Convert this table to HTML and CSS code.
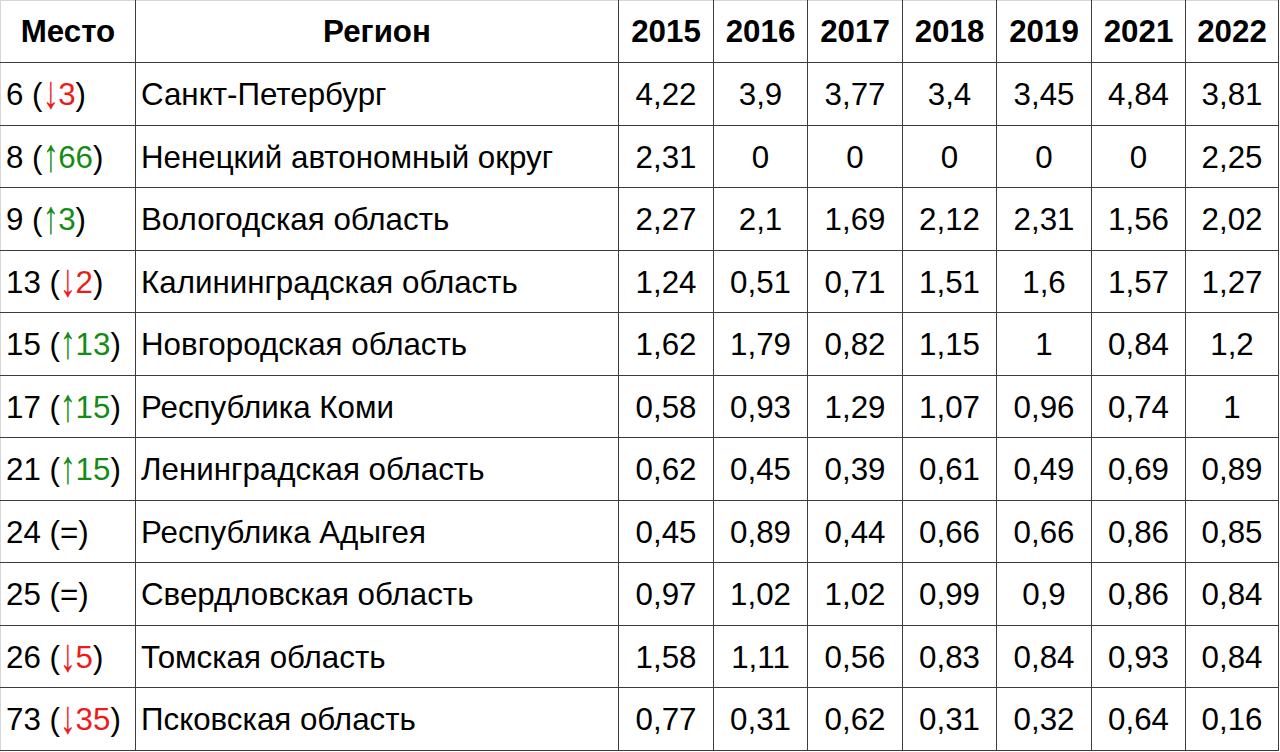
FILE: index.html
```html
<!DOCTYPE html>
<html lang="ru">
<head>
<meta charset="utf-8">
<title>Рейтинг регионов</title>
<link rel="stylesheet" href="styles.css">
</head>
<body>
<table class="rating">
  <colgroup>
    <col class="c-place"><col class="c-region">
    <col class="c-y1"><col class="c-y"><col class="c-y1"><col class="c-y"><col class="c-y1"><col class="c-y"><col class="c-last">
  </colgroup>
  <thead>
    <tr>
      <th>Место</th><th>Регион</th><th>2015</th><th>2016</th><th>2017</th><th>2018</th><th>2019</th><th>2021</th><th>2022</th>
    </tr>
  </thead>
  <tbody>
    <tr><td class="place">6 (<span class="down"><span class="arr">↓</span>3</span>)</td><td class="region">Санкт-Петербург</td><td>4,22</td><td>3,9</td><td>3,77</td><td>3,4</td><td>3,45</td><td>4,84</td><td>3,81</td></tr>
    <tr><td class="place">8 (<span class="up"><span class="arr">↑</span>66</span>)</td><td class="region">Ненецкий автономный округ</td><td>2,31</td><td>0</td><td>0</td><td>0</td><td>0</td><td>0</td><td>2,25</td></tr>
    <tr><td class="place">9 (<span class="up"><span class="arr">↑</span>3</span>)</td><td class="region">Вологодская область</td><td>2,27</td><td>2,1</td><td>1,69</td><td>2,12</td><td>2,31</td><td>1,56</td><td>2,02</td></tr>
    <tr><td class="place">13 (<span class="down"><span class="arr">↓</span>2</span>)</td><td class="region">Калининградская область</td><td>1,24</td><td>0,51</td><td>0,71</td><td>1,51</td><td>1,6</td><td>1,57</td><td>1,27</td></tr>
    <tr><td class="place">15 (<span class="up"><span class="arr">↑</span>13</span>)</td><td class="region">Новгородская область</td><td>1,62</td><td>1,79</td><td>0,82</td><td>1,15</td><td>1</td><td>0,84</td><td>1,2</td></tr>
    <tr><td class="place">17 (<span class="up"><span class="arr">↑</span>15</span>)</td><td class="region">Республика Коми</td><td>0,58</td><td>0,93</td><td>1,29</td><td>1,07</td><td>0,96</td><td>0,74</td><td>1</td></tr>
    <tr><td class="place">21 (<span class="up"><span class="arr">↑</span>15</span>)</td><td class="region">Ленинградская область</td><td>0,62</td><td>0,45</td><td>0,39</td><td>0,61</td><td>0,49</td><td>0,69</td><td>0,89</td></tr>
    <tr><td class="place">24 (=)</td><td class="region">Республика Адыгея</td><td>0,45</td><td>0,89</td><td>0,44</td><td>0,66</td><td>0,66</td><td>0,86</td><td>0,85</td></tr>
    <tr><td class="place">25 (=)</td><td class="region">Свердловская область</td><td>0,97</td><td>1,02</td><td>1,02</td><td>0,99</td><td>0,9</td><td>0,86</td><td>0,84</td></tr>
    <tr><td class="place">26 (<span class="down"><span class="arr">↓</span>5</span>)</td><td class="region">Томская область</td><td>1,58</td><td>1,11</td><td>0,56</td><td>0,83</td><td>0,84</td><td>0,93</td><td>0,84</td></tr>
    <tr><td class="place">73 (<span class="down"><span class="arr">↓</span>35</span>)</td><td class="region">Псковская область</td><td>0,77</td><td>0,31</td><td>0,62</td><td>0,31</td><td>0,32</td><td>0,64</td><td>0,16</td></tr>
  </tbody>
</table>
</body>
</html>
```
FILE: styles.css
```css
html, body {
  margin: 0;
  padding: 0;
  background: #ffffff;
}

body {
  font-family: "Liberation Sans", Arial, sans-serif;
  color: #000000;
}

.rating {
  border-collapse: collapse;
  table-layout: fixed;
  width: 1278px;
  font-size: 31.3px;
  line-height: 36px;
}

.c-place { width: 135px; }
.c-region { width: 483px; }
.c-y1 { width: 95px; }
.c-y { width: 94px; }
.c-last { width: 93px; }

.rating th,
.rating td {
  border: 1px solid #3c3c3c;
  padding: 0 5px;
  text-align: center;
  vertical-align: middle;
  white-space: nowrap;
  overflow: hidden;
}

.rating th {
  font-weight: bold;
  height: 60px;
  padding-top: 1px;
}

.rating td {
  height: 58.5px;
  padding-top: 3px;
}

.rating thead tr th {
  border-top-color: #d6d6d6;
}

.rating tr > :first-child {
  border-left-color: #d6d6d6;
}

.rating td.place,
.rating td.region {
  text-align: left;
}

.arr {
  display: inline-block;
  transform: scale(1.05, 1.5);
  transform-origin: 50% 62%;
}

.down { color: #ee1b1b; }
.up { color: #148c14; }
```
